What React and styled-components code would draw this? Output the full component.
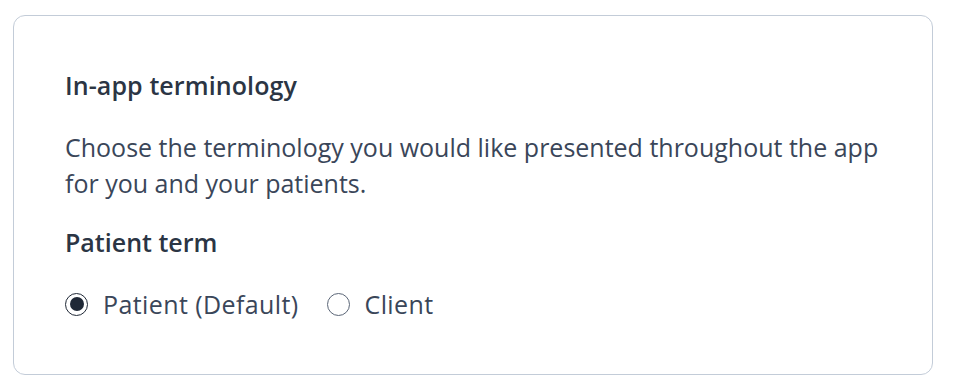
import React, { useState } from 'react';
import styled, { createGlobalStyle } from 'styled-components';

const GlobalStyle = createGlobalStyle`
  body {
    margin: 0;
    background: #ffffff;
    font-family: 'Open Sans', 'Noto Sans', sans-serif;
  }
`;

const Page = styled.div`
  padding: 15px 23px 0 13px;
`;

const Card = styled.section`
  box-sizing: border-box;
  width: 920px;
  height: 360px;
  border: 1px solid #c3ccd8;
  border-radius: 12px;
  padding: 51px 51px;
  color: #3a4659;
`;

const Title = styled.h2`
  margin: 0 0 26px;
  font-size: 25px;
  line-height: 36px;
  font-weight: 600;
  letter-spacing: 0.1px;
  color: #2b3544;
`;

const Description = styled.p`
  margin: 0 0 23px;
  font-size: 25px;
  line-height: 36px;
`;

const Label = styled.h3`
  margin: 0 0 26px;
  font-size: 25px;
  line-height: 36px;
  font-weight: 600;
  color: #2b3544;
`;

const RadioGroup = styled.div`
  display: flex;
  align-items: center;
  gap: 28px;
`;

const Option = styled.label`
  display: flex;
  align-items: center;
  gap: 15px;
  font-size: 25px;
  line-height: 36px;
  letter-spacing: 0.4px;
  cursor: pointer;
`;

const Circle = styled.span`
  box-sizing: border-box;
  width: 23px;
  height: 23px;
  border-radius: 50%;
  border: 1.5px solid ${({ checked }) => (checked ? '#1f2836' : '#5b6677')};
  display: flex;
  align-items: center;
  justify-content: center;

  &::after {
    content: '';
    width: 14px;
    height: 14px;
    border-radius: 50%;
    background: #1f2836;
    display: ${({ checked }) => (checked ? 'block' : 'none')};
  }
`;

const options = [
  { id: 'patient', label: 'Patient (Default)' },
  { id: 'client', label: 'Client' },
];

const App = () => {
  const [term, setTerm] = useState('patient');

  return (
    <Page>
      <GlobalStyle />
      <Card>
        <Title>In-app terminology</Title>
        <Description>
          Choose the terminology you would like presented throughout the app
          for you and your patients.
        </Description>
        <Label>Patient term</Label>
        <RadioGroup>
          {options.map((opt) => (
            <Option key={opt.id} onClick={() => setTerm(opt.id)}>
              <Circle checked={term === opt.id} />
              {opt.label}
            </Option>
          ))}
        </RadioGroup>
      </Card>
    </Page>
  );
};

export default App;
